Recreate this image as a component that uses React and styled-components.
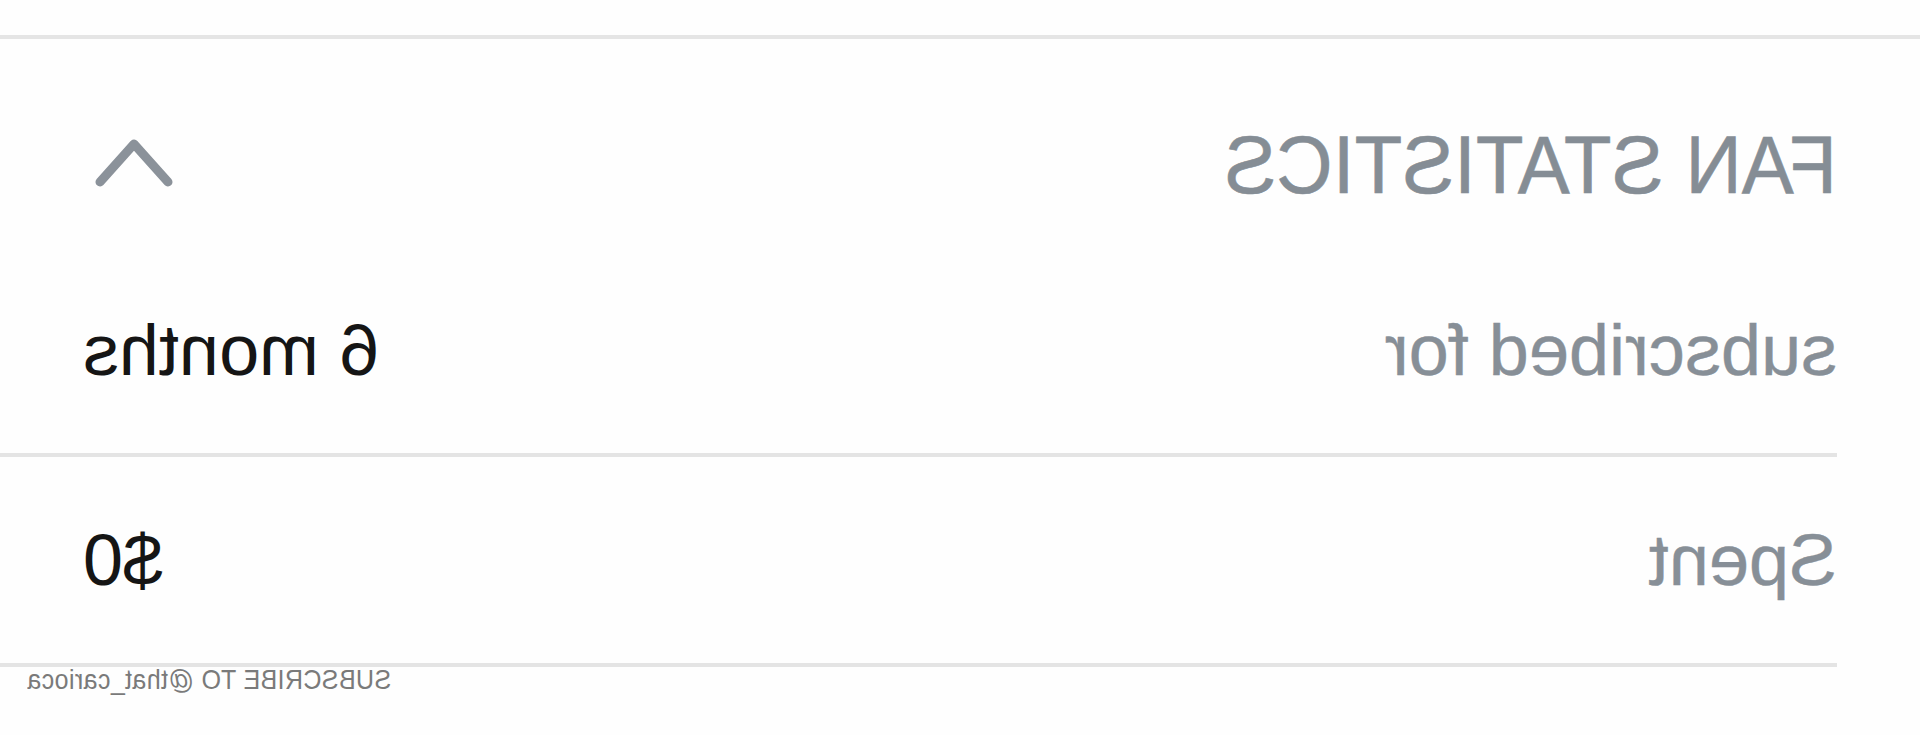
import React from "react";
import styled, { createGlobalStyle } from "styled-components";

const GlobalStyle = createGlobalStyle`
  html, body {
    margin: 0;
    padding: 0;
    background: #fefefe;
  }
  body {
    font-family: "Liberation Sans", Arial, sans-serif;
    overflow: hidden;
  }
`;

// the whole capture is mirrored left to right
const Page = styled.div`
  width: 1920px;
  height: 735px;
  background: #fefefe;
  transform: scaleX(-1);
  display: flex;
  flex-direction: column;
`;

const TopBar = styled.div`
  height: 35px;
  border-bottom: 4px solid #e5e5e5;
`;

const Header = styled.div`
  display: flex;
  align-items: center;
  justify-content: space-between;
  padding: 88px 95px 44px 83px;
`;

const Title = styled.h2`
  margin: 0;
  font-size: 78px;
  line-height: 76px;
  font-weight: 400;
  color: #858d95;
  transform: scaleY(1.05);
  -webkit-text-stroke: 0.6px #858d95;
`;

const Toggle = styled.button`
  border: 0;
  padding: 0;
  background: none;
  display: flex;
  width: 78px;
  height: 50px;
  margin-top: -6px;
`;

const Row = styled.div`
  display: flex;
  align-items: center;
  justify-content: space-between;
  height: 206px;
  margin-left: 83px;
  padding-right: 83px;
  border-bottom: 4px solid #e4e4e4;
`;

const Label = styled.span`
  font-size: 72px;
  line-height: 72px;
  color: #878f97;
  -webkit-text-stroke: 0.4px #878f97;
`;

const Value = styled.span`
  font-size: 72px;
  line-height: 72px;
  color: #151515;
`;

const Watermark = styled.div`
  align-self: flex-end;
  padding-right: 27px;
  font-size: 25px;
  line-height: 25px;
  color: #7a7a7a;
  letter-spacing: 0.4px;
  transform: scaleY(1.1);
`;

const stats = [
  { label: "subscribed for", value: "6 months" },
  { label: "Spent", value: "$0" },
];

const App = () => {
  return (
    <>
      <GlobalStyle />
      <Page>
        <TopBar />
        <Header>
          <Title>FAN STATISTICS</Title>
          <Toggle aria-label="collapse">
            <svg width="78" height="50" viewBox="0 0 78 50">
              <polyline
                points="5,45 39,7 73,45"
                fill="none"
                stroke="#8b929a"
                strokeWidth="9"
                strokeLinecap="round"
                strokeLinejoin="round"
              />
            </svg>
          </Toggle>
        </Header>
        {stats.map((s) => (
          <Row key={s.label}>
            <Label>{s.label}</Label>
            <Value>{s.value}</Value>
          </Row>
        ))}
        <Watermark>SUBSCRIBE TO @that_carioca</Watermark>
      </Page>
    </>
  );
};

export default App;
